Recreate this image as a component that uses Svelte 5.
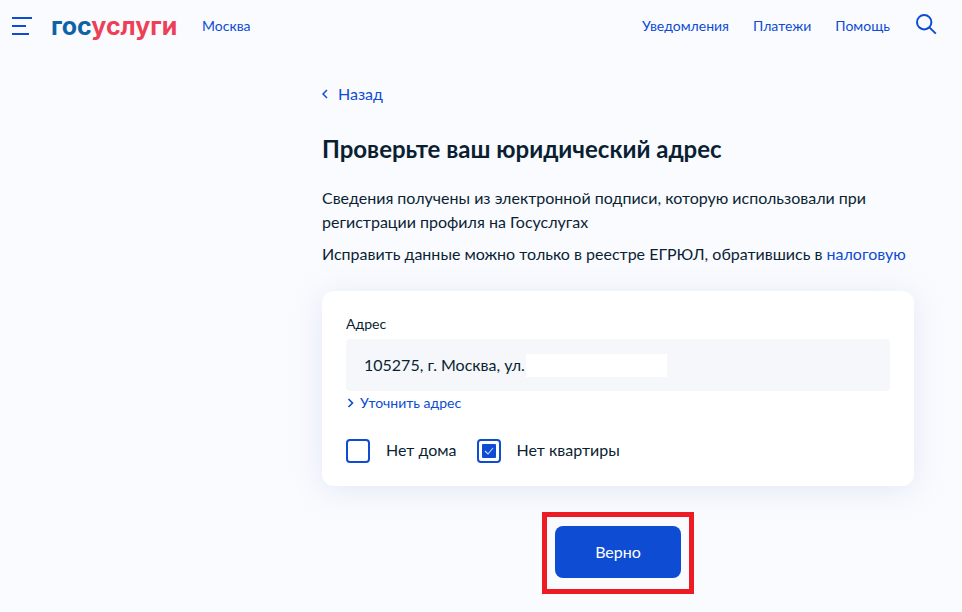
<script>
  const nav = ['Уведомления', 'Платежи', 'Помощь'];
  let noHouse = false;
  let noFlat = true;
</script>

<div class="page">
  <header class="header">
    <div class="left">
      <svg class="burger" width="20" height="18" viewBox="0 0 20 18" aria-hidden="true">
        <path d="M0 1h20M0 9h14M0 17h17" stroke="#0d4cd3" stroke-width="2" fill="none" />
      </svg>
      <span class="logo"><span class="blue">гос</span><span class="red">услуги</span></span>
      <a class="city" href="#city">Москва</a>
    </div>
    <nav class="nav">
      {#each nav as item}
        <a href="#nav">{item}</a>
      {/each}
      <svg class="search" width="21" height="21" viewBox="0 0 21 21" aria-hidden="true">
        <circle cx="8.2" cy="8.2" r="7.2" stroke="#0d4cd3" stroke-width="2" fill="none" />
        <path d="M13.4 13.4l6.4 6.2" stroke="#0d4cd3" stroke-width="2" fill="none" />
      </svg>
    </nav>
  </header>

  <main class="main">
    <a class="back" href="#back">
      <svg width="6" height="10" viewBox="0 0 6 10" aria-hidden="true">
        <path d="M5 1L1 5l4 4" stroke="#0d4cd3" stroke-width="1.5" fill="none" />
      </svg>
      Назад
    </a>
    <h1>Проверьте ваш юридический адрес</h1>
    <p class="info">Сведения получены из электронной подписи, которую использовали при регистрации профиля на Госуслугах</p>
    <p class="info second">Исправить данные можно только в реестре ЕГРЮЛ, обратившись в <a href="#tax">налоговую</a></p>

    <section class="card">
      <div class="label">Адрес</div>
      <div class="field">
        <span>105275, г. Москва, ул.</span>
        <span class="hidden-part"></span>
      </div>
      <a class="refine" href="#refine">
        <svg width="7" height="10" viewBox="0 0 7 10" aria-hidden="true">
          <path d="M1.5 1l4 4-4 4" stroke="#0d4cd3" stroke-width="1.6" fill="none" />
        </svg>
        Уточнить адрес
      </a>
      <div class="checks">
        <label class="check">
          <input type="checkbox" bind:checked={noHouse} />
          <span class="box">
            {#if noHouse}
              <span class="mark"><svg width="10" height="8" viewBox="0 0 10 8"><path d="M1 4l3 3 5-6" stroke="#fff" stroke-opacity="0.8" stroke-width="1.1" fill="none" /></svg></span>
            {/if}
          </span>
          <span class="check-text">Нет дома</span>
        </label>
        <label class="check">
          <input type="checkbox" bind:checked={noFlat} />
          <span class="box">
            {#if noFlat}
              <span class="mark"><svg width="10" height="8" viewBox="0 0 10 8"><path d="M1 4l3 3 5-6" stroke="#fff" stroke-opacity="0.8" stroke-width="1.1" fill="none" /></svg></span>
            {/if}
          </span>
          <span class="check-text">Нет квартиры</span>
        </label>
      </div>
    </section>

    <div class="action">
      <div class="highlight">
        <button type="button">Верно</button>
      </div>
    </div>
  </main>
</div>

<style>
  :global(body) {
    margin: 0;
    background: #fafbff;
    font-family: Lato, "Noto Sans", "Open Sans", sans-serif;
    color: #0b1f33;
  }

  a {
    text-decoration: none;
    color: #0d4cd3;
  }

  .page {
    height: 612px;
    overflow: hidden;
  }

  .header {
    height: 52px;
    display: flex;
    align-items: center;
    justify-content: space-between;
    padding: 0 25px 0 12px;
  }

  .left {
    display: flex;
    align-items: center;
  }

  .burger {
    margin-right: 19px;
  }

  .logo {
    font-family: Inter, sans-serif;
    font-size: 25px;
    font-weight: 700;
    line-height: 24px;
    width: 127px;
    margin-right: 24px;
  }

  .blue {
    color: #0d62a8;
  }

  .red {
    color: #ee3f58;
  }

  .city,
  .nav a {
    font-size: 14px;
    line-height: 20px;
  }

  .nav {
    display: flex;
    align-items: center;
    gap: 24px;
  }

  .search {
    margin: 0 0 3px 2px;
  }

  .main {
    width: 592px;
    margin-left: 322px;
    padding-top: 32px;
  }

  .back {
    display: flex;
    align-items: center;
    gap: 10px;
    font-size: 16px;
    line-height: 20px;
  }

  h1 {
    margin: 29px 0 0;
    font-size: 24px;
    line-height: 32px;
    font-weight: 700;
  }

  .info {
    margin: 21px 0 0;
    font-size: 16px;
    line-height: 24px;
  }

  .info.second {
    margin-top: 8px;
  }

  .card {
    margin-top: 25px;
    height: 195px;
    box-sizing: border-box;
    padding: 24px;
    background: #fff;
    border-radius: 12px;
    box-shadow: 0 4px 32px rgba(176, 189, 222, 0.3);
  }

  .label {
    font-size: 14px;
    line-height: 20px;
    margin-top: -1px;
  }

  .field {
    margin-top: 5px;
    height: 52px;
    box-sizing: border-box;
    padding: 0 0 1px 18px;
    border-radius: 4px;
    background: #f5f7fa;
    display: flex;
    align-items: center;
    font-size: 16px;
  }

  .hidden-part {
    width: 141px;
    height: 23px;
    background: #fff;
    margin: 2px 0 0 1px;
  }

  .refine {
    display: flex;
    align-items: center;
    gap: 6px;
    margin-top: 2px;
    padding-left: 1px;
    font-size: 14px;
    line-height: 20px;
  }

  .checks {
    display: flex;
    gap: 20px;
    margin-top: 25px;
  }

  .check {
    display: flex;
    align-items: center;
    gap: 16px;
    font-size: 16px;
    line-height: 24px;
  }

  .check input {
    display: none;
  }

  .check-text {
    margin-bottom: 2px;
  }

  .box {
    width: 24px;
    height: 24px;
    box-sizing: border-box;
    border: 2px solid #0d4cd3;
    border-radius: 4px;
    display: flex;
    align-items: center;
    justify-content: center;
  }

  .mark {
    width: 14px;
    height: 14px;
    background: #0d4cd3;
    border-radius: 1px;
    display: flex;
    align-items: center;
    justify-content: center;
  }

  .action {
    display: flex;
    justify-content: center;
    margin-top: 26px;
  }

  .highlight {
    border: 5px solid #ed1c24;
    padding: 9px 8px 11px;
  }

  button {
    display: block;
    width: 126px;
    height: 52px;
    padding: 0 0 2px;
    border: none;
    border-radius: 8px;
    background: #0d4cd3;
    color: #fff;
    font: inherit;
    font-size: 16px;
  }
</style>
